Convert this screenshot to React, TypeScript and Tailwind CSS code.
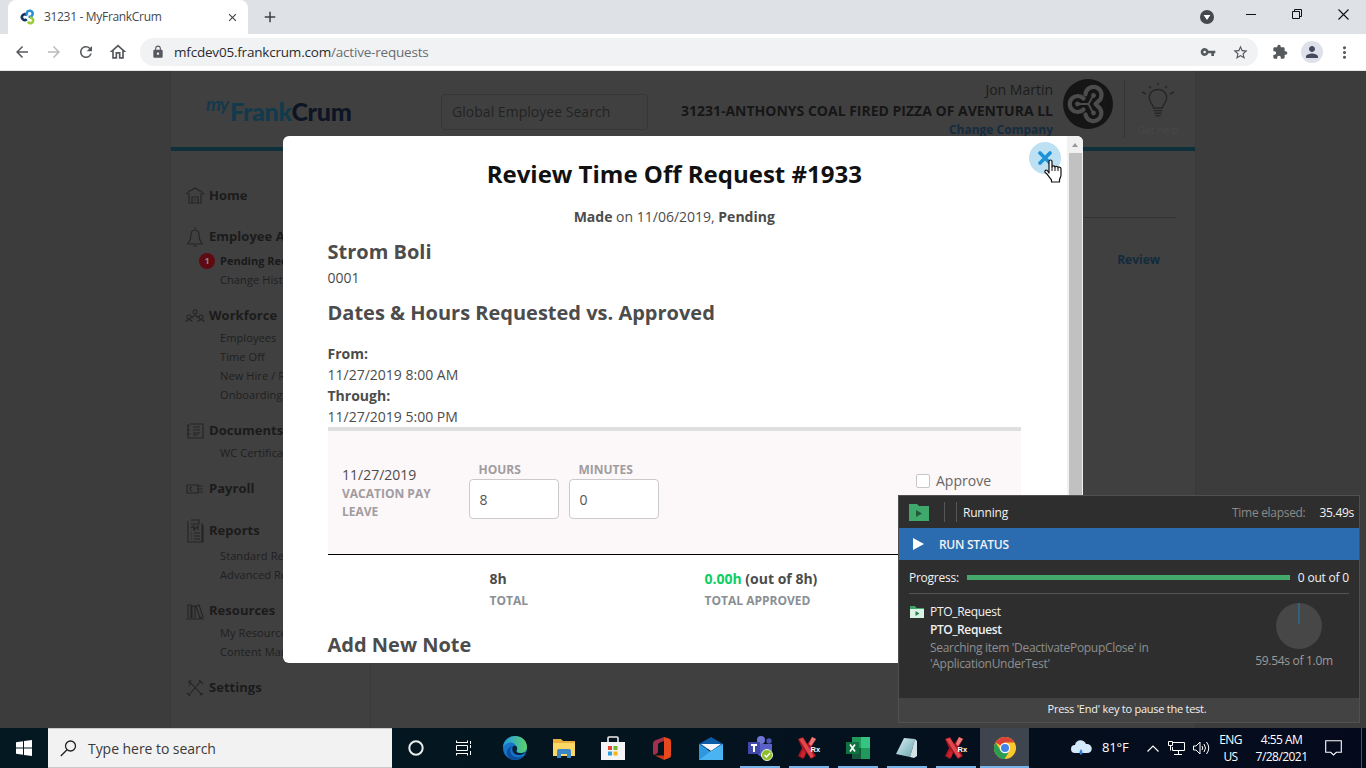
import React from "react";
import {
  MdAdd,
  MdArrowBack,
  MdArrowForward,
  MdClose,
  MdExtension,
  MdLock,
  MdMoreVert,
  MdOutlineHome,
  MdPerson,
  MdRefresh,
  MdStarBorder,
  MdVpnKey,
} from "react-icons/md";

function Favicon() {
  return (
    <svg width="16" height="16" viewBox="0 0 16 16" fill="none" strokeWidth="2.6">
      <path d="M6.8 6A2.900 2.900 0 1 0 6.800 10.300" stroke="#16355c" />
      <path d="M7.300 6.500A3 3 0 1 1 11 7.400L8.500 8" stroke="#2d8fd5" />
      <path d="M10 8.800A2.700 2.700 0 1 1 8 12.600" stroke="#9ccb3b" />
    </svg>
  );
}

function TabBar() {
  return (
    <div className="flex h-[34px] w-full shrink-0 bg-[#dee1e6]">
      <div className="ml-2 flex h-full w-[240px] items-center rounded-t-lg bg-white pl-3">
        <Favicon />
        <span className="ml-2 w-[182px] whitespace-nowrap text-[12px] tracking-[-0.32px] text-[#45494d]">31231 - MyFrankCrum</span>
        <MdClose className="size-[13px] text-[#3c4043]" />
      </div>
      <MdAdd className="ml-[13px] mt-2 size-[18px] text-[#3c4043]" />
      <div className="ml-auto flex items-start">
        <svg className="mr-[32px] mt-[10px]" width="14" height="14" viewBox="0 0 14 14">
          <circle cx="7" cy="7" r="7" fill="#45494e" />
          <path d="M3.6 5h6.8L7 10z" fill="#fff" />
        </svg>
        <svg className="mr-[36px] mt-[9px]" width="10" height="10" viewBox="0 0 10 10">
          <path d="M0 5.5h10" stroke="#111" />
        </svg>
        <svg className="mr-[35px] mt-[9px]" width="11" height="11" viewBox="0 0 11 11" fill="none" stroke="#111">
          <path d="M.5 2.5h7v7h-7zM2.5 2.5v-2h7v7h-2" />
        </svg>
        <svg className="mr-[17px] mt-[9px]" width="11" height="11" viewBox="0 0 11 11" stroke="#111" strokeWidth="1.1">
          <path d="M.5.5l10 10M10.5.5l-10 10" />
        </svg>
      </div>
    </div>
  );
}

function Toolbar() {
  return (
    <div className="flex h-[37px] w-full shrink-0 items-center border-b border-[#e3e5e6] bg-white pl-[13px] pr-[12px] text-[#55585c]">
      <MdArrowBack className="size-[18px]" />
      <MdArrowForward className="ml-[14px] size-[18px] text-[#b9bbbd]" />
      <MdRefresh className="ml-[14px] size-[18px]" />
      <MdOutlineHome className="ml-[13px] size-[20px]" />
      <div className="ml-[12px] flex h-7 w-[1118px] items-center rounded-full bg-[#f1f2f3] pl-[11px] pr-[9px]">
        <MdLock className="size-[14px]" />
        <span className="ml-[9px] whitespace-nowrap text-[13.5px] tracking-[-0.2px] text-[#2a2c2f]">
          mfcdev05.frankcrum.com<span className="text-[#696d71]">/active-requests</span>
        </span>
        <MdVpnKey className="ml-auto size-[16px]" />
        <MdStarBorder className="ml-4 size-[17px]" />
      </div>
      <MdExtension className="ml-[14px] size-[16px]" />
      <div className="ml-[13px] flex size-[22px] items-center justify-center rounded-full bg-[#dfe1ea]">
        <MdPerson className="size-[18px] text-[#44495f]" />
      </div>
      <MdMoreVert className="ml-auto size-[19px]" />
    </div>
  );
}

type IconName = "home" | "bell" | "people" | "doc" | "pay" | "report" | "books" | "tools";

function SideIcon({ name }: { name: IconName }) {
  const shapes: Record<IconName, React.ReactNode> = {
    home: <path d="M0 7.500L3 4h1l5-3 5 3h1l3 3.500M3 6v10h12V6M6 16v-6h6v6M8 13h2" />,
    bell: <path d="M9 1v2M1 18h16M2 17c3-3 3-5 3-8s1-5 4-5 4 2 4 5 0 5 3 8M7 20h4" />,
    people: <path d="M3 8a2 2 0 1 0 .1 0M15 8a2 2 0 1 0 .1 0M9 3a2 2 0 1 0 .1 0M0 15c0-3 6-3 6 0M12 15c0-3 6-3 6 0M6 11c0-3 6-3 6 0" />,
    doc: <path d="M4 2h13v14H6M1 4h3M1 8h3M1 12h3M2 2v14h4M7 5h7M7 8h7M7 11h7M7 13h5" />,
    pay: <path d="M1 5h11v8H1zM6 7a2 2 0 1 0 .1 4M12 6h5M11 9h6M12 12h5" />,
    report: <path d="M2 0v21h14V2M5-1h8v4H5M5 7l3-2v4l4-4v4M5 12h1M8 12h6M5 15h1M8 15h6M5 18h1M8 18h6M17 4v17" />,
    books: <path d="M2 16V3h3v13M6 16V4h3v12M10 4l3-1 4 12-3 1zM0 17h18" />,
    tools: <path d="M3 2l13 14M15 2L3 16M2 4l3-3M13 1l4 4M1 14l3 3M14 16l3-2M5 4L3 7" />,
  };
  const tall = name === "bell" || name === "report";
  return (
    <svg className="w-[18px] shrink-0 overflow-visible" height={tall ? 21 : 18} viewBox={tall ? "0 0 18 21" : "0 0 18 18"} fill="none" stroke="#242424" strokeWidth="1.1">
      {shapes[name]}
    </svg>
  );
}

const groups: { title: string; icon: IconName; h: string; items: string[] }[] = [
  { title: "Home", icon: "home", h: "h-[27px]", items: [] },
  { title: "Employee Activity", icon: "bell", h: "h-[29px]", items: ["Pending Requests", "Change History"] },
  { title: "Workforce", icon: "people", h: "h-[26px] pt-[2px]", items: ["Employees", "Time Off", "New Hire / Rehire", "Onboarding"] },
  { title: "Documents", icon: "doc", h: "h-[26px] pt-[2px]", items: ["WC Certificates"] },
  { title: "Payroll", icon: "pay", h: "h-[26px] pt-[2px]", items: [] },
  { title: "Reports", icon: "report", h: "h-[32px] pt-[2px]", items: ["Standard Reports", "Advanced Reports"] },
  { title: "Resources", icon: "books", h: "h-[26px] pt-[2px]", items: ["My Resources", "Content Manager"] },
  { title: "Settings", icon: "tools", h: "h-[26px] pt-[2px]", items: [] },
];

function Sidebar() {
  return (
    <nav className="flex w-[200px] shrink-0 flex-col gap-[13px] border-r border-[#3a3a3a] pl-[15px] pt-[31px]">
      {groups.map((g) => (
        <div key={g.title}>
          <div className={`flex items-center ${g.h}`}>
            <SideIcon name={g.icon} />
            <span className="ml-[5px] whitespace-nowrap text-[13px] font-bold tracking-[0.03px] text-[#1b1b1b]">{g.title}</span>
          </div>
          {g.items.map((item) =>
            item === "Pending Requests" ? (
              <div key={item} className="flex h-[19px] items-center pl-[13px]">
                <span className="flex size-4 shrink-0 items-center justify-center rounded-full bg-[#5d0a12] text-[9px] font-bold text-[#8d8384]">1</span>
                <span className="ml-[5px] whitespace-nowrap pt-[2px] text-[11px] font-bold text-[#191919]">{item}</span>
              </div>
            ) : (
              <div key={item} className="h-[19px] whitespace-nowrap pl-[34px] text-[11px] leading-[19px] tracking-[0.1px] text-[#1f1f1f]">
                {item}
              </div>
            )
          )}
        </div>
      ))}
    </nav>
  );
}

function CompanyMark() {
  return (
    <svg className="ml-[10px] mt-[8px] shrink-0" width="50" height="50" viewBox="0 0 50 50" fill="none">
      <circle cx="25" cy="25" r="25" fill="#151515" />
      <g stroke="#4c4c4c" strokeWidth="4.200" strokeLinecap="round" strokeLinejoin="round">
        <path d="M20.500 19.500A8 8 0 1 0 20.500 30.500" />
        <path d="M22.500 15.500A8 8 0 1 1 35 22.500L32.500 25L35 27.500A8 8 0 1 1 22.500 35.500" />
        <path d="M14.500 25H25.500L30 17M25.500 25L30 34" strokeWidth="1.800" />
      </g>
      <g fill="#4c4c4c">
        <circle cx="14.500" cy="25" r="2.400" />
        <circle cx="30.500" cy="16.500" r="2.400" />
        <circle cx="30.500" cy="34" r="2.400" />
      </g>
    </svg>
  );
}

function Site() {
  return (
    <div className="mx-auto flex h-[657px] w-[1026px] flex-col border-x border-[#3a3a3a] bg-[#404040]">
      <header className="flex h-[80px] shrink-0 border-b-4 border-[#0d303b]">
        <div className="flex w-[236px] shrink-0 pl-[35px] pt-[23px]">
          <span className="w-[24px] font-['Lato'] text-[19px] font-bold italic leading-[20px] tracking-[-1px] text-[#14394b]">my</span>
          <span className="mt-[2px] whitespace-nowrap font-['Lato'] text-[25px] font-black leading-[30px] tracking-[-0.25px] text-[#123a4d]">
            Frank<span className="text-[#0d1524]">Crum</span>
          </span>
        </div>
        <div className="ml-[34px] mt-[23px] flex h-9 w-[207px] shrink-0 items-center rounded border border-[#363636] pb-[2px] pl-[10px] text-[14px] tracking-[0.03px] text-[#232323]">
          Global Employee Search
        </div>
        <div className="ml-auto flex flex-col items-end whitespace-nowrap text-[#1c1c1c]">
          <span className="mt-[8px] text-[14px] leading-[21px]">Jon Martin</span>
          <span className="text-[14px] font-bold leading-[21px] text-[#161616]">31231-ANTHONYS COAL FIRED PIZZA OF AVENTURA LL</span>
          <span className="text-[12px] font-bold leading-[17px] text-[#142c40]">Change Company</span>
        </div>
        <CompanyMark />
        <div className="ml-[11px] mt-[9px] h-[58px] w-px bg-[#333]" />
        <div className="mr-[4px] flex w-[66px] flex-col items-center pt-[12px]">
          <svg width="34" height="38" viewBox="0 0 34 38" fill="none" stroke="#262626" strokeWidth="1.5">
            <path d="M12 25c0-4-5-6-5-12 0-12 20-12 20 0 0 6-5 8-5 12zM12 28h10M13 31h8M14 34h6" transform="translate(2 3) scale(.88)" />
            <path d="M17 0v2M8 3l2 2M26 3l-2 2M1 9l4 2M33 9l-4 2" />
          </svg>
          <span className="mt-[3px] text-[10px] leading-3 text-[#484848]">Get Help</span>
        </div>
      </header>
      <div className="flex min-h-0 flex-1">
        <Sidebar />
        <main className="flex flex-1 flex-col pr-[19px] pt-[66px]">
          <div className="h-px bg-[#333]" />
          <span className="mr-4 mt-[34px] self-end text-[12px] font-bold leading-4 text-[#112b3d]">Review</span>
        </main>
      </div>
    </div>
  );
}

function Field({ label, value }: { label: string; value: string }) {
  return (
    <div className="w-[90px]">
      <div className="pl-[10px] text-[12px] font-bold leading-[18px] text-[#a19ca0]">{label}</div>
      <div className="flex h-10 items-center rounded border border-[#ccc9cb] bg-white pl-[10px] text-[14px] text-[#555]">{value}</div>
    </div>
  );
}

function RequestModal() {
  return (
    <section className="absolute left-[283px] top-[65px] flex h-[527px] w-[800px] overflow-hidden rounded-md bg-white text-[14px] leading-[21px] text-[#4c4c4c]">
      <div className="flex w-[784px] flex-col pl-[44.5px] pr-[46px] pt-[22px]">
        <h1 className="text-center text-[24px] font-bold leading-8 text-[#111]">Review Time Off Request #1933</h1>
        <p className="mt-4 text-center">
          <b>Made</b> on 11/06/2019, <b>Pending</b>
        </p>
        <h2 className="mt-[11px] text-[20px] font-bold leading-7">Strom Boli</h2>
        <p className="mt-px">0001</p>
        <h2 className="mt-[11px] text-[20px] font-bold leading-7">Dates &amp; Hours Requested vs. Approved</h2>
        <div className="mt-4 h-[84px]">
          <p className="font-bold">From:</p>
          <p>11/27/2019 8:00 AM</p>
          <p className="font-bold">Through:</p>
          <p>11/27/2019 5:00 PM</p>
        </div>
        <div className="flex h-[128px] shrink-0 border-b border-t-4 border-b-black border-t-[#dfdfdf] bg-[#fcf7f8]">
          <div className="w-[141px] pl-[14.5px] pt-[33px]">
            <p>11/27/2019</p>
            <p className="w-[100px] text-[12px] font-bold leading-[18px] text-[#a19ca0]">VACATION PAY LEAVE</p>
          </div>
          <div className="flex gap-[10px] pt-[30px]">
            <Field label="HOURS" value="8" />
            <Field label="MINUTES" value="0" />
          </div>
          <div className="ml-auto mr-[30px] mt-[39px] flex h-[21px] items-center">
            <span className="mr-[6px] size-[14px] rounded-[2px] border border-[#c9c5c7] bg-white" />
            <span className="text-[14px] text-[#666]">Approve</span>
          </div>
        </div>
        <div className="flex h-[56px] shrink-0 pl-[162px] pt-[13px] font-bold">
          <div className="w-[215px]">
            <p>8h</p>
            <p className="mt-px text-[12px] text-[#8a8f94]">TOTAL</p>
          </div>
          <div>
            <p>
              <span className="text-[#0cce62]">0.00h</span> (out of 8h)
            </p>
            <p className="mt-px text-[12px] text-[#8a8f94]">TOTAL APPROVED</p>
          </div>
        </div>
        <h2 className="mt-[20px] text-[20px] font-bold leading-7">Add New Note</h2>
      </div>
      <div className="flex w-4 flex-col items-center bg-[#f1f1f1]">
        <svg width="16" height="17" viewBox="0 0 16 17">
          <path d="M5 11h6L8 7z" fill="#999" />
        </svg>
        <div className="w-[13px] flex-1 bg-[#c1c1c1]" />
      </div>
      <div className="absolute right-[22px] top-[6px] flex size-8 items-center justify-center rounded-full bg-[#bde0f3]">
        <svg width="14" height="14" viewBox="0 0 14 14" stroke="#1c93d6" strokeWidth="3.600" strokeLinecap="round">
          <path d="M2 2l10 10M12 2L2 12" />
        </svg>
      </div>
      <svg className="absolute left-[761px] top-[23px]" width="18" height="24" viewBox="0 0 18 24">
        <path
          d="M5 14V2.5C5 .5 8 .5 8 2.5V8c0-1.500 3-1.500 3 .3 0-1.500 3-1.300 3 .5 0-1.300 3-1 3 1V16c0 2-1 3-1.500 4.500V23H7.500v-2C5 18 3.500 15 1.300 13.500c-1-1 0-3 2-2z"
          fill="#fff"
          stroke="#111"
          strokeWidth="1.2"
          strokeLinejoin="round"
        />
        <path d="M8 8v4M11 8.500V12M14 9v3" stroke="#111" />
      </svg>
    </section>
  );
}

function RunFolder({ light }: { light?: boolean }) {
  return light ? (
    <svg className="shrink-0" width="14" height="12" viewBox="0 0 14 12">
      <path d="M0 0h5l1.500 2H14v10H0z" fill="#3fa36a" />
      <path d="M0 3h14v9H0z" fill="#d8f3e3" />
      <path d="M5.500 5v5l4-2.500z" fill="#2b7a4c" />
    </svg>
  ) : (
    <svg className="shrink-0" width="20" height="17" viewBox="0 0 20 17">
      <path d="M0 0h8l2 2h10v15H0z" fill="#3fa96c" />
      <path d="M7 6v7l6-3.500z" fill="#24583a" />
    </svg>
  );
}

function RunPanel() {
  return (
    <section className="absolute left-[898px] top-[424px] flex h-[228px] w-[462px] flex-col border border-[#505050] bg-[#2e2e2e] font-['Open_Sans'] text-[12px] tracking-[-0.3px] text-[#f2f2f2]">
      <div className="flex h-8 shrink-0 items-center pl-[10px] pr-[5px]">
        <RunFolder />
        <div className="ml-[15px] h-5 w-px bg-[#555]" />
        <div className="ml-[11px] h-5 w-px bg-[#555]" />
        <span className="ml-[6px] pt-[2px] tracking-[-0.2px]">Running</span>
        <span className="ml-auto pt-[2px] text-[#8b8b8b]">Time elapsed:</span>
        <span className="ml-[14px] pt-[2px]">35.49s</span>
      </div>
      <div className="flex h-8 shrink-0 items-center bg-[#2b6cb0] pl-[14px]">
        <svg width="11" height="12" viewBox="0 0 11 12">
          <path d="M0 0l11 6-11 6z" fill="#fff" />
        </svg>
        <span className="ml-[15px] pt-[2px] font-semibold">RUN STATUS</span>
      </div>
      <div className="mx-[10px] flex h-[34px] shrink-0 items-center border-b border-[#505555] pt-[2px]">
        <span className="tracking-[-0.25px]">Progress:</span>
        <div className="mx-2 h-[5px] flex-1 bg-[#43aa6c]" />
        <span className="tracking-[-0.2px]">0 out of 0</span>
      </div>
      <div className="flex flex-1">
        <div className="flex w-[340px] pl-[11px] pt-[9px]">
          <div className="w-5 pt-[3px]">
            <RunFolder light />
          </div>
          <div className="w-[240px]">
            <p className="leading-[18px]">PTO_Request</p>
            <p className="font-semibold leading-[18px] tracking-[-0.4px]">PTO_Request</p>
            <p className="pt-px leading-4 text-[#8f8f8f]">Searching item 'DeactivatePopupClose' in 'ApplicationUnderTest'</p>
          </div>
        </div>
        <div className="flex w-[110px] flex-col items-center pt-[9px] text-[#9a9a9a]">
          <svg className="ml-[10px]" width="46" height="46" viewBox="0 0 46 46">
            <circle cx="23" cy="23" r="23" fill="#474747" />
            <path d="M23 0v21" stroke="#2d6b93" strokeWidth="1.5" />
          </svg>
          <span className="mt-[4px] leading-4">59.54s of 1.0m</span>
        </div>
      </div>
      <div className="flex h-6 shrink-0 items-center justify-center bg-[#434343] pb-[2px] pr-1 text-[11px] tracking-[-0.25px]">Press 'End' key to pause the test.</div>
    </section>
  );
}

function RxIcon() {
  return (
    <svg width="26" height="26" viewBox="0 0 26 26">
      <path d="M2 4l5-2 4 7 5-7 4 2-5 9 5 8-5 3-5-7-3 7-5-3 4-8z" fill="#a81622" />
      <path d="M3 4l4-1 11 18-3 2z" fill="#e0474d" />
      <path d="M16 2l4 2-5 7-2-2z" fill="#f07a7a" />
      <path d="M7 15l3 3-2 5-4-2z" fill="#c9222d" />
      <text x="14.500" y="16.500" fill="#fff" fontSize="7.500" fontWeight="700" fontFamily="Liberation Sans">Rx</text>
    </svg>
  );
}

const apps: { name: string; state: "idle" | "open" | "active"; icon: React.ReactNode }[] = [
  {
    name: "cortana",
    state: "idle",
    icon: (
      <svg className="mr-[2px]" width="16" height="16" viewBox="0 0 16 16">
        <circle cx="8" cy="8" r="6.700" fill="none" stroke="#e8eef0" strokeWidth="2" />
      </svg>
    ),
  },
  {
    name: "task view",
    state: "idle",
    icon: (
      <svg className="mr-[3px]" width="16" height="16" viewBox="0 0 16 16" fill="none" stroke="#fff">
        <path d="M.5 3V.5M.5 2.500h11M11.500 3V.5M.5 5.500h11v5H.5zM.5 13v2.500M.5 13.500h11M11.500 13v2.500M14.500 1v3M14.500 5v3M14.500 11v4" />
      </svg>
    ),
  },
  {
    name: "edge",
    state: "idle",
    icon: (
      <svg width="24" height="24" viewBox="0 0 24 24">
        <defs>
          <linearGradient id="edgeTop" x1="0" x2="1">
            <stop offset="0" stopColor="#2298e2" />
            <stop offset="1" stopColor="#5bd36a" />
          </linearGradient>
        </defs>
        <circle cx="12" cy="12" r="12" fill="#1674c9" />
        <path d="M0 11C1-3 23-4 24 11c0 5-5 7-9 6-3-1 0-3-1-5C12 5 4 5 0 11z" fill="url(#edgeTop)" />
        <path d="M9 10c-5 7 2 14 11 10-5 6-15 5-16-2-1-4 2-7 5-8z" fill="#0d4f9e" />
        <path d="M10 10c2-1 5 0 4 3s-1 4 5 4c2 0 4-1 5-2-2 4-12 6-14 1-1-2-1-4 0-6z" fill="#06223c" />
      </svg>
    ),
  },
  {
    name: "explorer",
    state: "idle",
    icon: (
      <svg width="22" height="20" viewBox="0 0 22 20">
        <path d="M0 1h8l2 2h12v15H0z" fill="#e9b23d" />
        <path d="M0 5h22v13H0z" fill="#fbd764" />
        <path d="M4 20v-7q0-2 2-2h10q2 0 2 2v7h-4v-4H8v4z" fill="#3b86c8" />
      </svg>
    ),
  },
  {
    name: "store",
    state: "idle",
    icon: (
      <svg width="24" height="24" viewBox="0 0 24 24">
        <path d="M7 7V2q0-1 1-1h8q1 0 1 1v5" fill="none" stroke="#eee" strokeWidth="1.600" />
        <path d="M0 6h24v18H0z" fill="#f4f4f4" />
        <path d="M7 10h4v4H7z" fill="#e2492f" />
        <path d="M12.500 10h4v4h-4z" fill="#77b62f" />
        <path d="M7 15.500h4v4H7z" fill="#2b9fe0" />
        <path d="M12.500 15.500h4v4h-4z" fill="#f2b51e" />
      </svg>
    ),
  },
  {
    name: "office",
    state: "idle",
    icon: (
      <svg width="20" height="23" viewBox="0 0 20 23">
        <path d="M1 7Q1 4 4 3L12 0v4L8 5.500Q6 6 6 8v6q0 2-1 2.500L2 18q-1 0-1-2z" fill="#a3304a" />
        <path d="M12 0l5 1.500q2 .5 2 3v14q0 2-2 2.500L12 23z" fill="#e8481c" />
        <path d="M3 18.500h9V23z" fill="#c8331c" />
      </svg>
    ),
  },
  {
    name: "mail",
    state: "idle",
    icon: (
      <svg width="24" height="23" viewBox="0 0 24 23">
        <path d="M0 7L12 0l12 7v5H0z" fill="#0d5ca8" />
        <path d="M0 7v16h24V7L12 15z" fill="#2f96e0" />
        <path d="M2 7h20l-10 7z" fill="#f4f8fc" />
        <path d="M0 23l12-9L24 7v16z" fill="#4ab3f2" />
      </svg>
    ),
  },
  {
    name: "teams",
    state: "open",
    icon: (
      <svg width="26" height="26" viewBox="0 0 26 26">
        <circle cx="14" cy="5" r="4" fill="#6f76d6" />
        <circle cx="22" cy="6" r="2.700" fill="#4c53b5" />
        <path d="M9 9h16v7q-1 6-7 6-8 0-9-7z" fill="#5a61c6" />
        <path d="M1 7h12v12H1z" fill="#3f47a8" />
        <path d="M4 10h6M7 10v7" stroke="#fff" strokeWidth="2" />
        <circle cx="20" cy="20" r="5.500" fill="#8cbf2b" stroke="#e8f2d4" />
        <path d="M17.500 20l2 2 3.500-4" fill="none" stroke="#fff" strokeWidth="1.500" />
      </svg>
    ),
  },
  { name: "recorder", state: "open", icon: <RxIcon /> },
  {
    name: "excel",
    state: "open",
    icon: (
      <svg width="24" height="22" viewBox="0 0 24 22">
        <path d="M6 0h18v22H6z" fill="#1f9a5b" />
        <path d="M6 11h9v11H6z" fill="#15593a" />
        <path d="M15 0h9v11h-9z" fill="#35c481" />
        <path d="M0 5h13v12H0z" fill="#107240" />
        <path d="M4 7.500l5 7M9 7.500l-5 7" stroke="#fff" strokeWidth="1.700" />
      </svg>
    ),
  },
  {
    name: "notepad",
    state: "open",
    icon: (
      <svg width="22" height="22" viewBox="0 0 22 22">
        <defs>
          <linearGradient id="notePage" x1="0" y1="0" x2="1" y2="1">
            <stop offset="0" stopColor="#d8f0f3" />
            <stop offset="1" stopColor="#6da5b1" />
          </linearGradient>
        </defs>
        <path d="M8 1l11 1-5 18-14-3z" fill="url(#notePage)" />
        <path d="M19 2l2 2v15l-3 2-4-1z" fill="#d3e3e5" />
      </svg>
    ),
  },
  { name: "runner", state: "open", icon: <RxIcon /> },
  {
    name: "chrome",
    state: "active",
    icon: (
      <svg width="22" height="22" viewBox="0 0 24 24">
        <circle cx="12" cy="12" r="12" fill="#f9c82c" />
        <path d="M12 12L1.600 6A12 12 0 0 1 22.400 6H12z" fill="#dc4336" />
        <path d="M1.600 6L8 16l3.500 8A12 12 0 0 1 1.600 6z" fill="#2b9d53" />
        <path d="M8 15l4 2.500 4-1L11.500 24A12 12 0 0 1 6 22z" fill="#2b9d53" />
        <circle cx="12" cy="12" r="5.600" fill="#fff" />
        <circle cx="12" cy="12" r="4.400" fill="#4285e8" />
      </svg>
    ),
  },
];

function Taskbar() {
  return (
    <footer className="flex h-10 w-full shrink-0 items-center bg-gradient-to-r from-[#031820] via-[#04141f] to-[#040a1c] text-white">
      <div className="flex w-12 justify-center">
        <svg width="16" height="16" viewBox="0 0 16 16" fill="#fff">
          <path d="M0 2.200L7 1.200V7.500H0zM8 1.100L16 0v7.500H8zM0 8.500h7v6.300l-7-1zM8 8.500h8V16l-8-1.100z" />
        </svg>
      </div>
      <div className="flex h-full w-[344px] items-center border-y border-[#c9c9c9] bg-[#f2f2f2] pl-3 text-[#3a3a3a]">
        <svg width="17" height="17" viewBox="0 0 17 17" fill="none" stroke="#222" strokeWidth="1.300">
          <circle cx="10.500" cy="6" r="5" />
          <path d="M7 9.800L.8 16" />
        </svg>
        <span className="ml-[11px] whitespace-nowrap text-[14px] tracking-[-0.05px]">Type here to search</span>
      </div>
      <div className="flex h-full">
        {apps.map((a) => (
          <div key={a.name} className="flex h-full w-[49px] flex-col items-center">
            <div className={a.state === "active" ? "flex h-[38px] w-full items-center justify-center bg-[#3e454e] pt-[2px]" : "flex h-[38px] w-full items-center justify-center pt-[2px]"}>{a.icon}</div>
            {a.state === "open" && <div className="h-[2px] w-10 bg-[#77b4ea]" />}
            {a.state === "active" && <div className="h-[2px] w-full bg-[#77b4ea]" />}
          </div>
        ))}
      </div>
      <svg className="ml-[42px] shrink-0" width="21" height="16" viewBox="0 0 21 16">
        <path d="M4 13a4 4 0 0 1 0-8c1-6 9-6 11-1 7-1 8 9 1 9z" fill="#d3e8fb" />
        <path d="M10 9q3 4 0 6-3-2 0-6z" fill="#2e7fd8" />
      </svg>
      <span className="ml-[10px] text-[13px] tracking-[-0.15px]">81°F</span>
      <svg className="ml-[18px]" width="12" height="7" viewBox="0 0 12 7" fill="none" stroke="#fff" strokeWidth="1.200">
        <path d="M.5 6.500L6 1l5.500 5.500" />
      </svg>
      <svg className="ml-[9px]" width="17" height="14" viewBox="0 0 17 14" fill="none" stroke="#fff">
        <path d="M5 1.500h11.500v8H4.500V6M.5.5h4v4h-4zM2.500 4.500v5M10.500 9.500v4M6 13.500h8" />
      </svg>
      <svg className="ml-[8px]" width="17" height="14" viewBox="0 0 17 14" fill="none" stroke="#fff">
        <path d="M.5 5h2.500l4-4v12L3 9H.5zM9 5q1.500 2 0 4M11 3q3 4 0 8M13.500 1q4.500 6 0 12" />
      </svg>
      <div className="ml-[9px] w-6 text-center text-[12px] leading-[17px] tracking-[-0.6px]">ENG US</div>
      <div className="ml-[7px] w-[64px] whitespace-nowrap text-center text-[12px] leading-[17px] tracking-[-0.55px]">
        <p>4:55 AM</p>
        <p>7/28/2021</p>
      </div>
      <svg className="ml-[11px]" width="17" height="16" viewBox="0 0 17 16" fill="none" stroke="#fff" strokeWidth="1.100">
        <path d="M.7.7h15.600v11.600h-5L8.500 15l-2.800-2.700h-5z" />
      </svg>
      <div className="ml-auto mr-[4px] h-full w-px bg-[#4a5260]" />
    </footer>
  );
}

export default function App() {
  return (
    <div className="flex h-[768px] w-[1366px] flex-col overflow-hidden bg-[#3c3c3c] font-['Open_Sans',sans-serif]">
      <TabBar />
      <Toolbar />
      <div className="relative h-[657px] w-full shrink-0 bg-[#3c3c3c]">
        <Site />
        <RequestModal />
        <RunPanel />
      </div>
      <Taskbar />
    </div>
  );
}
